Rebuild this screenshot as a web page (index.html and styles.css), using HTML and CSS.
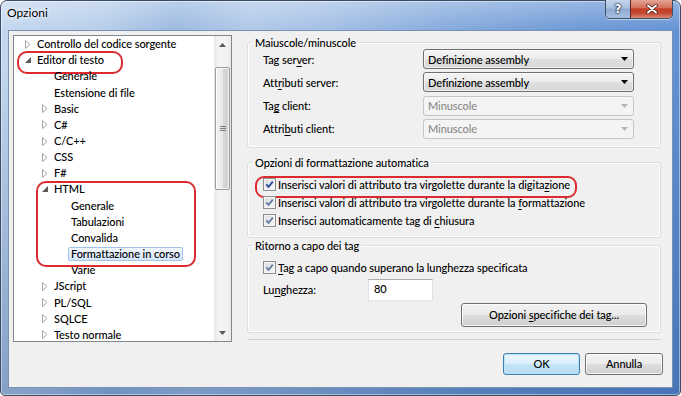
FILE: index.html
```html
<!DOCTYPE html>
<html lang="it">
<head>
<meta charset="utf-8">
<title>Opzioni</title>
<link rel="stylesheet" href="styles.css">
</head>
<body>
<div class="window">
  <div class="titlebar">
    <span class="title">Opzioni</span>
    <div class="caption">
      <span class="cap-btn cap-help">?</span>
      <span class="cap-btn cap-close"><svg width="12" height="10" viewBox="0 0 12 10"><path d="M2 1.5 L10 8.5 M10 1.5 L2 8.5" stroke="#4a1c14" stroke-width="3.6" stroke-linecap="round"/><path d="M2 1.5 L10 8.5 M10 1.5 L2 8.5" stroke="#ffffff" stroke-width="2" stroke-linecap="round"/></svg></span>
    </div>
  </div>
  <div class="client">
    <div class="tree">
      <ul class="tree-list">
        <li><div class="row lvl0"><span class="exp"><svg class="tri-c" width="6" height="9" viewBox="0 0 6 9"><path d="M0.5 0.5 L5 4.5 L0.5 8.5 Z"/></svg></span><span class="text">Controllo del codice sorgente</span></div></li>
        <li><div class="row lvl0 mark-editor"><span class="exp"><svg class="tri-e" width="6" height="6" viewBox="0 0 6 6"><path d="M6 0 V6 H0 Z"/></svg></span><span class="text">Editor di testo</span></div>
          <ul>
            <li><div class="row lvl1"><span class="exp"></span><span class="text">Generale</span></div></li>
            <li><div class="row lvl1"><span class="exp"></span><span class="text">Estensione di file</span></div></li>
            <li><div class="row lvl1"><span class="exp"><svg class="tri-c" width="6" height="9" viewBox="0 0 6 9"><path d="M0.5 0.5 L5 4.5 L0.5 8.5 Z"/></svg></span><span class="text">Basic</span></div></li>
            <li><div class="row lvl1"><span class="exp"><svg class="tri-c" width="6" height="9" viewBox="0 0 6 9"><path d="M0.5 0.5 L5 4.5 L0.5 8.5 Z"/></svg></span><span class="text">C#</span></div></li>
            <li><div class="row lvl1"><span class="exp"><svg class="tri-c" width="6" height="9" viewBox="0 0 6 9"><path d="M0.5 0.5 L5 4.5 L0.5 8.5 Z"/></svg></span><span class="text">C/C++</span></div></li>
            <li><div class="row lvl1"><span class="exp"><svg class="tri-c" width="6" height="9" viewBox="0 0 6 9"><path d="M0.5 0.5 L5 4.5 L0.5 8.5 Z"/></svg></span><span class="text">CSS</span></div></li>
            <li><div class="row lvl1"><span class="exp"><svg class="tri-c" width="6" height="9" viewBox="0 0 6 9"><path d="M0.5 0.5 L5 4.5 L0.5 8.5 Z"/></svg></span><span class="text">F#</span></div></li>
            <li class="html-group"><div class="row lvl1"><span class="exp"><svg class="tri-e" width="6" height="6" viewBox="0 0 6 6"><path d="M6 0 V6 H0 Z"/></svg></span><span class="text">HTML</span></div>
              <ul>
                <li><div class="row lvl2"><span class="exp"></span><span class="text">Generale</span></div></li>
                <li><div class="row lvl2"><span class="exp"></span><span class="text">Tabulazioni</span></div></li>
                <li><div class="row lvl2"><span class="exp"></span><span class="text">Convalida</span></div></li>
                <li><div class="row lvl2"><span class="exp"></span><span class="text selected">Formattazione in corso</span></div></li>
                <li><div class="row lvl2"><span class="exp"></span><span class="text">Varie</span></div></li>
              </ul>
            </li>
            <li><div class="row lvl1"><span class="exp"><svg class="tri-c" width="6" height="9" viewBox="0 0 6 9"><path d="M0.5 0.5 L5 4.5 L0.5 8.5 Z"/></svg></span><span class="text">JScript</span></div></li>
            <li><div class="row lvl1"><span class="exp"><svg class="tri-c" width="6" height="9" viewBox="0 0 6 9"><path d="M0.5 0.5 L5 4.5 L0.5 8.5 Z"/></svg></span><span class="text">PL/SQL</span></div></li>
            <li><div class="row lvl1"><span class="exp"><svg class="tri-c" width="6" height="9" viewBox="0 0 6 9"><path d="M0.5 0.5 L5 4.5 L0.5 8.5 Z"/></svg></span><span class="text">SQLCE</span></div></li>
            <li><div class="row lvl1"><span class="exp"><svg class="tri-c" width="6" height="9" viewBox="0 0 6 9"><path d="M0.5 0.5 L5 4.5 L0.5 8.5 Z"/></svg></span><span class="text">Testo normale</span></div></li>
          </ul>
        </li>
      </ul>
      <div class="vscroll">
        <div class="sb-btn"><svg width="7" height="4" viewBox="0 0 7 4"><path d="M3.5 0 L7 4 H0 Z" fill="#5a5a5a"/></svg></div>
        <div class="sb-track">
          <div class="sb-thumb"><span class="grip"></span></div>
        </div>
        <div class="sb-btn"><svg width="7" height="4" viewBox="0 0 7 4"><path d="M0 0 H7 L3.5 4 Z" fill="#5a5a5a"/></svg></div>
      </div>
    </div>

    <div class="panel">
      <fieldset class="group group-case">
        <legend>Maiuscole/minuscole</legend>
        <div class="group-body body-case">
          <div class="field-row"><span class="field-label">Tag ser<u>v</u>er:</span><div class="combo"><span>Definizione assembly</span><svg width="7" height="4" viewBox="0 0 7 4"><path d="M0 0 H7 L3.5 4 Z"/></svg></div></div>
          <div class="field-row"><span class="field-label">Att<u>r</u>ibuti server:</span><div class="combo"><span>Definizione assembly</span><svg width="7" height="4" viewBox="0 0 7 4"><path d="M0 0 H7 L3.5 4 Z"/></svg></div></div>
          <div class="field-row"><span class="field-label">Ta<u>g</u> client:</span><div class="combo disabled"><span>Minuscole</span><svg width="7" height="4" viewBox="0 0 7 4"><path d="M0 0 H7 L3.5 4 Z"/></svg></div></div>
          <div class="field-row"><span class="field-label">Attri<u>b</u>uti client:</span><div class="combo disabled"><span>Minuscole</span><svg width="7" height="4" viewBox="0 0 7 4"><path d="M0 0 H7 L3.5 4 Z"/></svg></div></div>
        </div>
      </fieldset>

      <fieldset class="group group-format">
        <legend>Opzioni di formattazione automatica</legend>
        <div class="group-body body-format">
          <div class="check-row mark-check"><span class="checkbox hot"><svg width="11" height="11" viewBox="0 0 11 11"><path d="M2.3 5.4 L4.5 7.9 L8.8 2.6" /></svg></span><span>Inserisci valori di attributo tra virgolette durante la digita<u>z</u>ione</span></div>
          <div class="check-row"><span class="checkbox"><svg width="11" height="11" viewBox="0 0 11 11"><path d="M2.3 5.4 L4.5 7.9 L8.8 2.6" /></svg></span><span>Inserisci valori di attributo tra virgolette durante la <u>f</u>ormattazione</span></div>
          <div class="check-row"><span class="checkbox"><svg width="11" height="11" viewBox="0 0 11 11"><path d="M2.3 5.4 L4.5 7.9 L8.8 2.6" /></svg></span><span>Inserisci automaticamente tag di <u>c</u>hiusura</span></div>
        </div>
      </fieldset>

      <fieldset class="group group-wrap">
        <legend>Ritorno a capo dei tag</legend>
        <div class="group-body body-wrap">
          <div class="check-row"><span class="checkbox"><svg width="11" height="11" viewBox="0 0 11 11"><path d="M2.3 5.4 L4.5 7.9 L8.8 2.6" /></svg></span><span><u>T</u>ag a capo quando superano la lunghezza specificata</span></div>
          <div class="len-row"><span class="len-label">Lu<u>n</u>ghezza:</span><div class="textbox">80</div></div>
          <div class="tagopt-row"><div class="btn btn-wide"><span>Opzioni <u>s</u>pecifiche dei tag...</span></div></div>
        </div>
      </fieldset>

      <div class="separator"></div>

      <div class="dialog-buttons">
        <div class="btn btn-default"><span>OK</span></div>
        <div class="btn btn-cancel"><span>Annulla</span></div>
      </div>
    </div>
  </div>
</div>
</body>
</html>
```

FILE: styles.css
```css
* { box-sizing: border-box; }

html, body {
  margin: 0;
  padding: 0;
}

body {
  width: 681px;
  height: 396px;
  overflow: hidden;
  background: #ffffff;
  font-family: "Lato", "Noto Sans", sans-serif;
  font-size: 11px;
  font-weight: 500;
  letter-spacing: -0.08px;
  color: #000;
}

u { text-decoration-thickness: 1px; text-underline-offset: 2px; }

/* ---------- window frame ---------- */
.window {
  width: 681px;
  height: 396px;
  display: flex;
  flex-direction: column;
  border: 1px solid #3a4c66;
  border-radius: 7px 7px 5px 5px;
  padding: 0 7px 7px 7px;
  background:
    linear-gradient(to bottom, rgba(255,255,255,0.3) 0, rgba(255,255,255,0) 30px, rgba(30,70,130,0) 60px, rgba(30,70,130,0.35) 100%),
    linear-gradient(100deg, #c4d8ef 0%, #b6cdea 14%, #9cbae1 24%, #afc8e8 34%, #a3bfe5 44%, #85aadc 60%, #6c99d6 78%, #5d8dd2 100%);
  box-shadow: inset 0 0 0 1px rgba(255,255,255,0.45);
}

.titlebar {
  height: 29px;
  display: flex;
  justify-content: space-between;
  align-items: flex-start;
}

.title {
  margin: 5px 0 0 -1px;
  line-height: 14px;
  font-size: 12px;
  font-weight: 400;
  letter-spacing: 0;
  color: #000;
  text-shadow: 0 0 6px rgba(255,255,255,0.9), 0 0 3px rgba(255,255,255,0.8);
}

.caption {
  display: flex;
  margin-top: -1px;
  height: 19px;
  border: 1px solid #3b4f6b;
  border-top: none;
  border-radius: 0 0 5px 5px;
  overflow: hidden;
  box-shadow: 0 1px 0 rgba(255,255,255,0.5);
}

.cap-btn {
  display: flex;
  align-items: center;
  justify-content: center;
  height: 18px;
}

.cap-help {
  width: 24px;
  background: linear-gradient(#c6d6ec 0%, #a9bfdf 45%, #90aad2 50%, #a6bee2 100%);
  color: #fff;
  font-weight: bold;
  font-size: 12px;
  font-family: "DejaVu Sans", sans-serif;
  text-shadow: 0 0 1px #1d2a40, 0 0 2px #1d2a40, 0 0 2px #1d2a40;
}

.cap-close {
  width: 42px;
  border-left: 1px solid #5a2a26;
  background: linear-gradient(#e3a293 0%, #d5715d 42%, #c33d22 50%, #c44c35 75%, #de8a72 100%);
}

/* ---------- client area ---------- */
.client {
  flex: 1;
  display: flex;
  align-items: flex-start;
  background: #f0f0f0;
  border: 1px solid #7a91b2;
  padding: 4px 0 0 4px;
}

/* ---------- tree ---------- */
.tree {
  width: 219px;
  height: 307px;
  display: flex;
  border: 1px solid #828790;
  background: #fff;
}

.tree-list,
.tree-list ul {
  list-style: none;
  margin: 0;
  padding: 0;
}

.tree-list {
  flex: 1;
  overflow: hidden;
}

.tree-list li { position: relative; }

.row {
  position: relative;
  display: flex;
  align-items: center;
  height: 16.17px;
  white-space: nowrap;
}

.lvl0 { padding-left: 0; }
.lvl1 { padding-left: 17px; }
.lvl2 { padding-left: 34px; }

.exp {
  width: 20px;
  flex: none;
  display: flex;
  align-items: center;
  padding-left: 11px;
}

.tri-c path { fill: #fff; stroke: #a6a6a6; stroke-width: 1; }
.tri-e path { fill: #595959; }

.text {
  display: inline-block;
  border: 1px solid transparent;
  padding: 0 2px;
  line-height: 12px;
  border-radius: 2px;
}

.text.selected {
  border-color: #a4c3e8;
  background: linear-gradient(#f2f8fe, #d6e6fa);
}

/* red annotation marks */
.mark-editor::after {
  content: "";
  position: absolute;
  left: 3px;
  top: -1px;
  width: 102px;
  height: 19px;
  border: 2px solid #dc2b2f;
  border-radius: 10px;
}

.html-group::after {
  content: "";
  position: absolute;
  left: 22px;
  top: 0;
  width: 156px;
  height: 82px;
  border: 2px solid #dc2b2f;
  border-radius: 10px;
  pointer-events: none;
}

/* scrollbar */
.vscroll {
  width: 17px;
  flex: none;
  display: flex;
  flex-direction: column;
  background: linear-gradient(to right, #e6e6e6, #f3f3f3 25%, #f3f3f3 75%, #e9e9e9);
}

.sb-btn {
  height: 17px;
  display: flex;
  align-items: center;
  justify-content: center;
}

.sb-track {
  flex: 1;
  padding: 14px 1px 0 1px;
}

.sb-thumb {
  height: 123px;
  border: 1px solid #9a9a9a;
  border-radius: 2px;
  background: linear-gradient(to right, #f3f3f3, #e8e8e8 50%, #d6d6d6 51%, #d2d2d2);
  box-shadow: inset 0 0 0 1px rgba(255,255,255,0.7);
  display: flex;
  align-items: center;
  justify-content: center;
}

.grip {
  width: 6px;
  height: 5px;
  background: repeating-linear-gradient(to bottom, #7b7b7b 0, #7b7b7b 1px, transparent 1px, transparent 2px);
}

/* ---------- right panel ---------- */
.panel {
  width: 416px;
  margin-left: 15px;
  display: flex;
  flex-direction: column;
}

.group {
  margin: 0;
  padding: 0;
  width: 414px;
  min-width: 0;
  border: 1px solid #d5dfe5;
  border-radius: 3px;
  box-shadow: inset 0 0 0 1px #ffffff;
}

.group legend {
  margin-left: 5px;
  padding: 0 2px;
  line-height: 13px;
  color: #000;
}

.group-case { margin-top: 1px; }
.group-format { margin-top: 8px; }
.group-wrap { margin-top: 1px; }

.body-case {
  display: flex;
  flex-direction: column;
  gap: 3.33px;
  padding: 0 26px 8px 15px;
}

.body-format { padding: 7px 15px 7px 15px; }
.body-wrap { padding: 7px 13px 5px 15px; }

.field-row {
  display: flex;
  align-items: center;
  height: 20px;
}

.field-label { width: 160px; flex: none; }

.combo {
  width: 211px;
  height: 20px;
  display: flex;
  align-items: center;
  justify-content: space-between;
  padding: 0 5px 0 4px;
  border: 1px solid #707070;
  border-radius: 3px;
  background: linear-gradient(#f4f4f4 0%, #ebebeb 48%, #dfdfdf 52%, #d8d8d8 100%);
  box-shadow: inset 0 0 0 1px rgba(255,255,255,0.6);
}

.combo svg path { fill: #000; }

.combo.disabled {
  border-color: #c2c5c9;
  background: #f4f4f4;
  color: #8a8a8a;
  box-shadow: none;
}

.combo.disabled svg path { fill: #b4b4b4; }

.check-row {
  position: relative;
  display: flex;
  align-items: center;
  height: 18px;
  white-space: nowrap;
}

.checkbox {
  width: 13px;
  height: 13px;
  flex: none;
  margin-right: 2px;
  border: 1px solid #8e8f8f;
  background: linear-gradient(135deg, #d9dce0, #f8f8f8);
  box-shadow: inset 0 0 0 1px #f4f4f4;
  display: flex;
}

.checkbox path {
  fill: none;
  stroke: #6a7ca5;
  stroke-width: 1.8;
}

.checkbox.hot path { stroke: #26499a; }

.mark-check::after {
  content: "";
  position: absolute;
  left: -8px;
  top: 0;
  width: 318px;
  height: 18px;
  border: 2px solid #dc2b2f;
  border-radius: 9px;
}

.len-row {
  display: flex;
  align-items: center;
  height: 22px;
  margin-top: 2px;
}

.len-label { width: 105px; flex: none; }

.textbox {
  width: 65px;
  height: 22px;
  padding: 2px 5px;
  line-height: 14px;
  background: #fff;
  border: 1px solid;
  border-color: #abadb3 #dbdfe6 #e3e9ef #e2e3ea;
}

.tagopt-row {
  display: flex;
  justify-content: flex-end;
  margin-top: 2px;
}

.btn {
  display: flex;
  align-items: center;
  justify-content: center;
  border: 1px solid #707070;
  border-radius: 3px;
  background: linear-gradient(#f2f2f2 0%, #ebebeb 48%, #dddddd 52%, #cfcfcf 100%);
  box-shadow: inset 0 0 0 1px rgba(255,255,255,0.75);
}

.btn-wide { width: 186px; height: 24px; }

.separator {
  width: 414px;
  height: 1px;
  margin-top: 6px;
  background: #d5d5d5;
}

.dialog-buttons {
  display: flex;
  justify-content: flex-end;
  gap: 5px;
  margin-top: 13px;
}

.btn-default {
  width: 77px;
  height: 22px;
  border-color: #3c7fb1;
  background: linear-gradient(#e9f5fc 0%, #dcf0fb 48%, #c4e5f7 52%, #b6dcf2 100%);
  box-shadow: inset 0 0 0 1px #b8e3f8;
}

.btn-cancel {
  width: 78px;
  height: 22px;
}
```
